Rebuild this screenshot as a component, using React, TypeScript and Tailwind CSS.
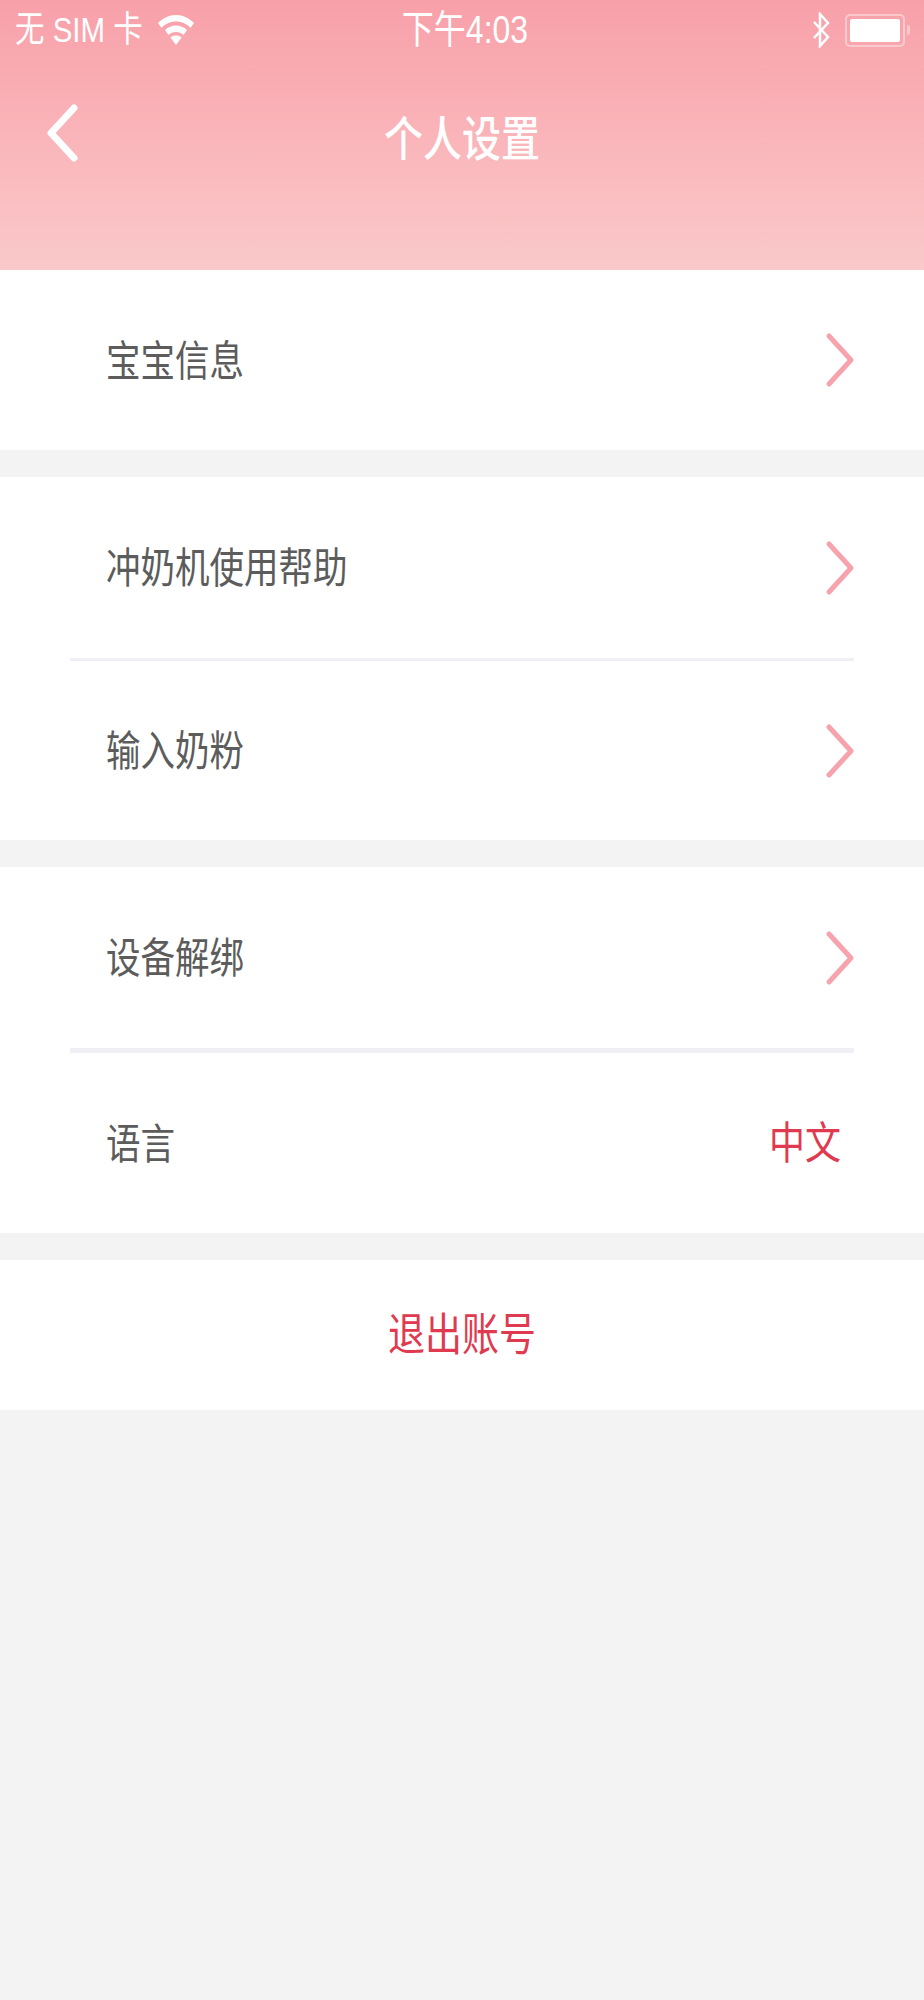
const font = { fontFamily: '"Liberation Sans", "Noto Sans CJK SC", sans-serif' };

function Chevron() {
  return (
    <svg width="30" height="56" viewBox="0 0 30 56" fill="none" className="shrink-0">
      <path d="M4 4 L26 28 L4 52" stroke="#f7a3ae" strokeWidth="5" strokeLinecap="round" strokeLinejoin="round" />
    </svg>
  );
}

function Label({ children, className }: { children: React.ReactNode; className?: string }) {
  // reference is stretched vertically, so glyphs are taller than wide
  return <span className={`inline-block origin-center scale-y-[1.22] leading-none ${className ?? ""}`}>{children}</span>;
}

function Row({ title, height = "h-[181px]" }: { title: string; height?: string }) {
  return (
    <div className={`flex items-center justify-between pl-[106px] pr-[69px] ${height}`}>
      <Label className="mt-[2px] text-[34.5px] text-[#5c5c5c]">{title}</Label>
      <Chevron />
    </div>
  );
}

export default function App() {
  return (
    <div className="min-h-[2000px] w-[924px] bg-[#f3f3f3]" style={font}>
      {/* header */}
      <header className="h-[270px] bg-gradient-to-b from-[#f8a0a9] to-[#fac9ca] text-white">
        <div className="flex h-[60px] items-center justify-between pl-[15px] pr-[14px]">
          <div className="flex w-[340px] items-center gap-[16px]">
            <Label className="text-[29.5px]">无 SIM 卡</Label>
            <svg width="36" height="30" viewBox="0 0 36 30" fill="white" className="ml-[-1px]">
              <path d="M18 0 C11 0 5 3 0 8 L3.5 13 C7 9 12 6.5 18 6.5 C24 6.5 29 9 32.5 13 L36 8 C31 3 25 0 18 0 Z" />
              <path d="M18 10.5 C14 10.5 10 12 7 15 L10.5 20 C12.5 18 15 17 18 17 C21 17 23.5 18 25.5 20 L29 15 C26 12 22 10.5 18 10.5 Z" />
              <path d="M18 20.5 C16 20.5 14 21 12.5 22.5 L18 30 L23.5 22.5 C22 21 20 20.5 18 20.5 Z" />
            </svg>
          </div>
          <Label className="ml-[5px] text-[32px]">下午4:03</Label>
          <div className="flex w-[340px] items-center justify-end gap-[15px]">
            <svg width="18" height="36" viewBox="0 0 18 36" fill="none" stroke="white" strokeWidth="2.5">
              <path d="M2 10 L16 25 L8 34 L8 2 L16 11 L2 26" />
            </svg>
            <div className="flex items-center gap-[2px]">
              <div className="flex h-[33px] w-[60px] items-center rounded-[5px] border-2 border-white/40 p-[3px]">
                <div className="h-full w-full rounded-[2px] bg-white" />
              </div>
              <div className="h-[10px] w-[3px] rounded-r-full bg-white/40" />
            </div>
          </div>
        </div>
        <div className="relative flex h-[156px] items-center justify-center">
          <svg width="34" height="62" viewBox="0 0 34 62" fill="none" className="absolute left-[45px] top-[42px]">
            <path d="M29 6 L6 31 L29 56" stroke="white" strokeWidth="7" strokeLinecap="round" strokeLinejoin="round" />
          </svg>
          <Label className="mt-[2px] text-[39px] font-medium">个人设置</Label>
        </div>
      </header>

      <section className="bg-white">
        <Row title="宝宝信息" height="h-[180px]" />
      </section>

      <section className="mt-[27px] bg-white">
        <Row title="冲奶机使用帮助" />
        <div className="ml-[70px] mr-[70px] h-[3px] bg-[#f0eff5]" />
        <Row title="输入奶粉" height="h-[179px]" />
      </section>

      <section className="mt-[27px] bg-white">
        <Row title="设备解绑" />
        <div className="ml-[70px] mr-[70px] h-[5px] bg-[#f0eff5]" />
        <div className="flex h-[180px] items-center justify-between pl-[106px] pr-[83px]">
          <Label className="mt-[2px] text-[34.5px] text-[#5c5c5c]">语言</Label>
          <Label className="mt-[2px] text-[36px] text-[#df3a4f]">中文</Label>
        </div>
      </section>

      <section className="mt-[27px] flex h-[150px] items-center justify-center bg-white">
        <Label className="text-[37px] text-[#df3a4f]">退出账号</Label>
      </section>
    </div>
  );
}
